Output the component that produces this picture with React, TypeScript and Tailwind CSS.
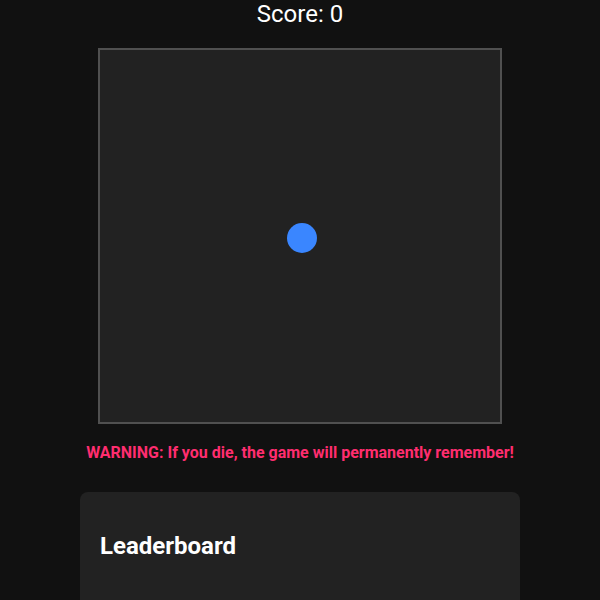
import React from "react";

export default function App() {
  return (
    <div
      className="min-h-screen w-full bg-[#111111] flex flex-col items-center text-white"
      style={{ fontFamily: "Roboto, 'Liberation Sans', sans-serif" }}
    >
      <div className="text-[24px] leading-[28px] font-normal">Score: 0</div>
      <div className="mt-5 relative w-[404px] h-[376px] border-2 border-[#505050] bg-[#222222]">
        <div className="absolute left-[187px] top-[173px] w-[30px] h-[30px] rounded-full bg-[#3a86ff]" />
      </div>
      <div className="mt-[17px] text-[16px] leading-6 font-bold text-[#ff2d6f]">
        WARNING: If you die, the game will permanently remember!
      </div>
      <div className="mt-[27px] w-[440px] rounded-lg bg-[#222222] p-5 h-[200px]">
        <h2 className="mt-[18px] text-[24px] leading-8 font-bold">Leaderboard</h2>
      </div>
    </div>
  );
}
